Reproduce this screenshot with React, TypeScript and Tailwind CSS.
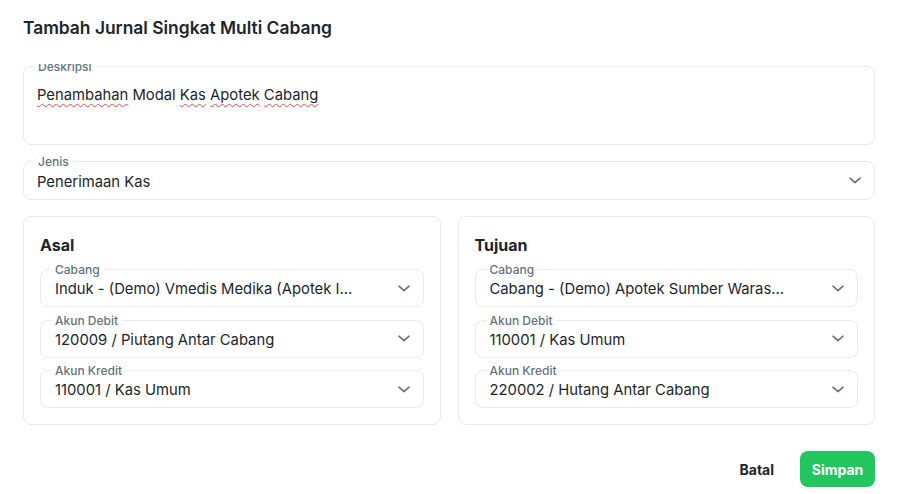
import React from "react";

const font = { fontFamily: "Inter, 'Noto Sans', 'Liberation Sans', sans-serif" };

function Chevron() {
  return (
    <svg width="12" height="7" viewBox="0 0 12 7" fill="none" className="shrink-0">
      <path d="M1 1.2 L6 5.6 L11 1.2" stroke="#637381" strokeWidth="1.6" strokeLinecap="round" strokeLinejoin="round" />
    </svg>
  );
}

function FieldLabel({ children }: { children: React.ReactNode }) {
  return (
    <span className="absolute left-[10px] -top-[8px] bg-white px-[4px] text-[12px] leading-[16px] font-medium text-[#637381]">
      {children}
    </span>
  );
}

function SelectField({ label, value }: { label: string; value: string }) {
  return (
    <div className="relative flex h-[38px] items-center rounded-lg border border-[#e8eaed] pl-[14px] pr-[13px]">
      <FieldLabel>{label}</FieldLabel>
      <div className="min-w-0 flex-1 truncate pr-[42px] pt-[2px] text-[14.8px] leading-[22px] text-[#1c252e]">{value}</div>
      <Chevron />
    </div>
  );
}

function Squiggle({ children }: { children: React.ReactNode }) {
  return (
    <span className="underline decoration-wavy decoration-[#ef4444] decoration-1 underline-offset-[3px]">{children}</span>
  );
}

function BranchCard({ title, items }: { title: string; items: { label: string; value: string }[] }) {
  return (
    <div className="min-w-0 flex-1 rounded-lg border border-[#e8eaed] p-[16px]">
      <h3 className="mb-[12px] text-[16px] leading-[24px] font-bold text-[#1c252e]">{title}</h3>
      <div className="flex flex-col gap-[12.5px]">
        {items.map((it) => (
          <SelectField key={it.label} label={it.label} value={it.value} />
        ))}
      </div>
    </div>
  );
}

export default function App() {
  return (
    <div className="flex h-[494px] w-[898px] flex-col bg-white" style={font}>
      <h2 className="px-[23px] pt-[16px] text-[17.4px] leading-[24px] font-semibold text-[#1c252e]">
        Tambah Jurnal Singkat Multi Cabang
      </h2>
      <div className="mt-[24px] h-[370px] overflow-hidden px-[23px]">
        <div className="mt-[2px] flex flex-col gap-[16px]">
          <div className="relative h-[79px] rounded-lg border border-[#e8eaed] pl-[13px] pt-[17px]">
            <FieldLabel>Deskripsi</FieldLabel>
            <p className="text-[14.8px] leading-[23px] text-[#1c252e]">
              <Squiggle>Penambahan</Squiggle> Modal <Squiggle>Kas</Squiggle> <Squiggle>Apotek</Squiggle>{" "}
              <Squiggle>Cabang</Squiggle>
            </p>
          </div>
          <div className="relative flex h-[39px] items-center rounded-lg border border-[#e8eaed] pl-[13px] pr-[13px]">
            <FieldLabel>Jenis</FieldLabel>
            <div className="flex-1 pt-[2px] text-[14.8px] leading-[22px] text-[#1c252e]">Penerimaan Kas</div>
            <Chevron />
          </div>
          <div className="flex gap-[17px]">
            <BranchCard
              title="Asal"
              items={[
                { label: "Cabang", value: "Induk - (Demo) Vmedis Medika (Apotek Induk)" },
                { label: "Akun Debit", value: "120009 / Piutang Antar Cabang" },
                { label: "Akun Kredit", value: "110001 / Kas Umum" },
              ]}
            />
            <BranchCard
              title="Tujuan"
              items={[
                { label: "Cabang", value: "Cabang - (Demo) Apotek Sumber Warase (Cabang)" },
                { label: "Akun Debit", value: "110001 / Kas Umum" },
                { label: "Akun Kredit", value: "220002 / Hutang Antar Cabang" },
              ]}
            />
          </div>
        </div>
      </div>
      <div className="flex items-center justify-end gap-[10px] px-[23px] pt-[17px]">
        <button className="h-[36px] rounded-lg px-[16px] text-[14px] font-bold text-[#1c252e]">Batal</button>
        <button className="h-[36px] w-[75px] rounded-lg bg-[#22c55e] text-[14px] font-bold text-white">Simpan</button>
      </div>
    </div>
  );
}
